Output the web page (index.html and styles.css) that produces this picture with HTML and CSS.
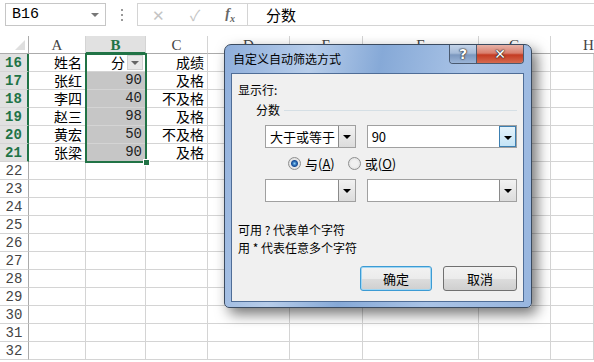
FILE: index.html
```html
<!DOCTYPE html>
<html lang="zh-CN">
<head>
    <meta charset="UTF-8">
    <title>自定义自动筛选方式</title>
    <link rel="stylesheet" href="styles.css">
</head>
<body>
    <div class="formula-bar">
        <div class="name-box"><span>B16</span><i class="nb-arrow"></i></div>
        <div class="fb-grip"><i></i><i></i><i></i></div>
        <div class="fb-icons">
            <span class="fb-cancel">✕</span>
            <span class="fb-enter">✓</span>
            <span class="fb-fx">f<sub>x</sub></span>
        </div>
        <div class="fb-input">分数</div>
    </div>

    <div class="sheet-wrap">
        <div class="sheet" id="sheet"></div>
        <div class="selection"><span class="fill-handle"></span></div>
    </div>

    <div class="dialog">
        <div class="dlg-title">
            <span class="dlg-caption">自定义自动筛选方式</span>
            <div class="dlg-btns">
                <span class="btn-help">?</span>
                <span class="btn-close">✕</span>
            </div>
        </div>
        <div class="dlg-client">
            <div class="lbl">显示行:</div>
            <div class="group"><span>分数</span></div>
            <div class="cond-row">
                <div class="combo op"><span>大于或等于</span><i class="dd"></i></div>
                <div class="combo val"><span>90</span><i class="dd hot"></i></div>
            </div>
            <div class="radio-row">
                <span class="radio on"><i></i><span>与(<u>A</u>)</span></span>
                <span class="radio"><i></i><span>或(<u>O</u>)</span></span>
            </div>
            <div class="cond-row">
                <div class="combo op"><span></span><i class="dd"></i></div>
                <div class="combo val"><span></span><i class="dd"></i></div>
            </div>
            <div class="hint first">可用 ? 代表单个字符</div>
            <div class="hint">用 * 代表任意多个字符</div>
            <div class="actions">
                <button class="btn default">确定</button>
                <button class="btn">取消</button>
            </div>
        </div>
    </div>

    <script>
        const cols = ['', 'A', 'B', 'C', 'D', 'E', 'F', 'G', 'H'];
        const data = {
            16: ['姓名', '分', '成绩'],
            17: ['张红', '90', '及格'],
            18: ['李四', '40', '不及格'],
            19: ['赵三', '98', '及格'],
            20: ['黄宏', '50', '不及格'],
            21: ['张梁', '90', '及格']
        };
        const sheet = document.getElementById('sheet');

        function cell(cls, text) {
            const div = document.createElement('div');
            div.className = cls;
            if (text) div.textContent = text;
            sheet.appendChild(div);
            return div;
        }

        cols.forEach((c, i) => {
            if (i === 0) cell('corner');
            else cell('ch col-' + c.toLowerCase() + (c === 'B' ? ' sel' : ''), c);
        });

        for (let r = 16; r <= 32; r++) {
            const row = data[r];
            cell(row ? 'rh sel' : 'rh', String(r));
            for (let i = 1; i < cols.length; i++) {
                const value = row && row[i - 1] ? row[i - 1] : '';
                let cls = 'c';
                if (i === 2 && row) cls += r === 16 ? ' active' : ' hl num';
                const div = cell(cls, value);
                if (i === 2 && r === 16) {
                    const btn = document.createElement('i');
                    btn.className = 'filter-btn';
                    div.appendChild(btn);
                }
            }
        }
    </script>
</body>
</html>
```

FILE: styles.css
```css
* {
    margin: 0;
    padding: 0;
    box-sizing: border-box;
}
body {
    width: 594px;
    height: 362px;
    overflow: hidden;
    background: #fff;
    position: relative;
    font-family: "Noto Sans CJK SC", sans-serif;
    color: #000;
}

/* formula bar */
.formula-bar {
    display: flex;
    align-items: stretch;
    height: 36px;
    padding-top: 3px;
    padding-bottom: 10px;
}
.name-box {
    margin-left: 5px;
    width: 101px;
    border: 1px solid #c6c6c6;
    display: flex;
    align-items: center;
    justify-content: space-between;
    padding: 0 6px 0 6px;
    font: 15px "Liberation Mono", monospace;
}
.nb-arrow {
    border-left: 4px solid transparent;
    border-right: 4px solid transparent;
    border-top: 4px solid #777;
}
.fb-grip {
    width: 31px;
    display: flex;
    flex-direction: column;
    align-items: center;
    justify-content: center;
    gap: 3px;
}
.fb-grip i {
    width: 2px;
    height: 2px;
    background: #999;
}
.fb-icons {
    width: 110px;
    border: 1px solid #d4d4d4;
    border-right: none;
    display: flex;
    align-items: center;
    justify-content: space-between;
    padding: 0 12px 0 14px;
    color: #c4c4c4;
    font-size: 15px;
}
.fb-fx {
    font: italic bold 14px "Liberation Serif", serif;
    color: #666;
}
.fb-fx sub {
    font-size: 10px;
}
.fb-input {
    flex: 1;
    border: 1px solid #d4d4d4;
    border-right: none;
    padding-left: 18px;
    font-size: 15px;
    line-height: 21px;
}

/* sheet */
.sheet-wrap {
    position: relative;
    width: 594px;
    overflow: hidden;
}
.sheet {
    display: grid;
    grid-template-columns: 29px 57px 60px 62px 82px 73px 116px 72px 1fr;
    grid-auto-rows: 18px;
}
.corner {
    border-right: 1px solid #ababab;
    border-bottom: 1px solid #ababab;
    position: relative;
}
.corner::after {
    content: "";
    position: absolute;
    right: 3px;
    bottom: 3px;
    border-left: 10px solid transparent;
    border-bottom: 10px solid #dfdfdf;
}
.ch {
    border-right: 1px solid #d4d4d4;
    border-bottom: 1px solid #ababab;
    text-align: center;
    font: 15px/18px "Liberation Serif", serif;
    color: #444;
}
.ch.col-h {
    border-right: none;
    text-align: left;
    padding-left: 32px;
}
.ch.sel {
    background: #e1e1e1;
    color: #217346;
    font-weight: bold;
    border-bottom: 2px solid #217346;
}
.rh {
    border-right: 1px solid #ababab;
    border-bottom: 1px solid #d4d4d4;
    text-align: center;
    font: 14px/18px "Liberation Mono", monospace;
    color: #444;
}
.rh.sel {
    background: #e1e1e1;
    color: #217346;
    font-weight: bold;
    border-right: 2px solid #217346;
}
.c {
    border-right: 1px solid #d4d4d4;
    border-bottom: 1px solid #d4d4d4;
    text-align: right;
    padding-right: 3px;
    font-size: 14px;
    line-height: 17px;
    white-space: nowrap;
}
.c.num {
    font-family: "Liberation Mono", monospace;
    font-size: 14px;
    color: #222;
}
.c.hl {
    background: #c6c6c6;
}
.c.active {
    display: flex;
    justify-content: flex-end;
    align-items: center;
    gap: 2px;
    padding-right: 2px;
}
.filter-btn {
    width: 16px;
    height: 15px;
    background: #e8e8e8;
    border: 1px solid #d0d0d0;
    position: relative;
}
.filter-btn::after {
    content: "";
    position: absolute;
    left: 3px;
    top: 5px;
    border-left: 4px solid transparent;
    border-right: 4px solid transparent;
    border-top: 4px solid #666;
}
.selection {
    position: absolute;
    left: 85px;
    top: 17px;
    width: 62px;
    height: 110px;
    border: 2px solid #217346;
}
.fill-handle {
    position: absolute;
    right: -5px;
    bottom: -5px;
    width: 7px;
    height: 7px;
    background: #217346;
    border: 1px solid #fff;
}

/* dialog */
.dialog {
    position: absolute;
    left: 224px;
    top: 44px;
    width: 308px;
    height: 264px;
    border: 1px solid #3b4b60;
    border-radius: 7px 7px 5px 5px;
    background: linear-gradient(100deg, #8eaedb 0%, #b7cdea 25%, #86a9d7 45%, #a9c3e6 70%, #98b6df 100%);
    box-shadow: 5px 6px 14px rgba(0, 0, 0, 0.55);
    padding: 0 7px 5px 6px;
    display: flex;
    flex-direction: column;
    font-size: 12px;
}
.dlg-title {
    height: 28px;
    display: flex;
    justify-content: space-between;
    align-items: flex-start;
}
.dlg-caption {
    margin-top: 7px;
    margin-left: 2px;
    font-size: 12px;
    line-height: 14px;
}
.dlg-btns {
    display: flex;
    height: 19px;
    border: 1px solid #4a5a70;
    border-top: none;
    border-radius: 0 0 4px 4px;
    overflow: hidden;
}
.btn-help,
.btn-close {
    display: flex;
    align-items: center;
    justify-content: center;
    color: #fff;
    font: bold 14px "DejaVu Sans", sans-serif;
    text-shadow: 0 0 1px #222, 0 0 1px #222, 0 0 2px #333;
}
.btn-help {
    width: 27px;
    background: linear-gradient(#c3d3e8, #a6bcd9 45%, #7c98bf 55%, #9bb5d8);
    border-right: 1px solid #4a5a70;
}
.btn-close {
    width: 46px;
    background: linear-gradient(#e7b2a7, #d97f6e 45%, #c43b23 55%, #d66a4f);
}
.dlg-client {
    flex: 1;
    background: #f0f0f0;
    border: 1px solid #4f6d97;
    padding: 9px 6px 0 6px;
    display: flex;
    flex-direction: column;
}
.lbl {
    line-height: 14px;
}
.group {
    margin-top: 6px;
    padding-left: 18px;
    display: flex;
    align-items: center;
    gap: 4px;
    line-height: 14px;
}
.group::after {
    content: "";
    flex: 1;
    height: 1px;
    background: #d5dfe5;
}
.cond-row {
    display: flex;
    gap: 11px;
    margin-left: 27px;
    margin-top: 8px;
}
.combo {
    height: 23px;
    background: #fff;
    border: 1px solid #a0a0a0;
    display: flex;
    justify-content: space-between;
    align-items: stretch;
    font-size: 13px;
}
.combo span {
    padding-left: 4px;
    line-height: 21px;
}
.combo.op {
    width: 91px;
}
.combo.val {
    width: 151px;
}
.dd {
    width: 17px;
    background: linear-gradient(#f2f2f2, #dcdcdc);
    border-left: 1px solid #8a8a8a;
    position: relative;
}
.dd.hot {
    background: linear-gradient(#e5f3fb, #c4e4f6);
    border: 1px solid #3c7fb1;
}
.dd::after {
    content: "";
    position: absolute;
    left: 4px;
    top: 9px;
    border-left: 4px solid transparent;
    border-right: 4px solid transparent;
    border-top: 4px solid #000;
}
.radio-row {
    display: flex;
    gap: 13px;
    margin-left: 50px;
    margin-top: 5px;
    height: 20px;
    align-items: center;
    font-size: 13px;
}
.radio {
    display: flex;
    align-items: center;
    gap: 4px;
}
.radio i {
    width: 13px;
    height: 13px;
    border-radius: 50%;
    border: 1px solid #8e8f8f;
    background: radial-gradient(circle, #f0f0f0 40%, #d7d7d7 100%);
}
.radio.on i {
    background: radial-gradient(circle, #8fd0f6 0, #2a6cb5 2px, #1d4f96 3px, #e9e9e9 4px, #d3d3d3 100%);
}
.radio u {
    text-decoration: underline;
}
.radio-row + .cond-row {
    margin-top: 6px;
}
.hint {
    line-height: 18px;
}
.hint.first {
    margin-top: 19px;
}
.actions {
    display: flex;
    justify-content: flex-end;
    gap: 11px;
    margin-top: 9px;
    padding-right: 0;
}
.btn {
    height: 25px;
    font: 13px "Noto Sans CJK SC", sans-serif;
    background: linear-gradient(#f2f2f2 0%, #ebebeb 50%, #dddddd 51%, #cfcfcf 100%);
    border: 1px solid #707070;
    border-radius: 3px;
}
.btn.default {
    width: 72px;
    border-color: #3c9bd4;
    box-shadow: inset 0 0 0 1px #9fd6f3;
}
.btn + .btn {
    width: 74px;
}
```
